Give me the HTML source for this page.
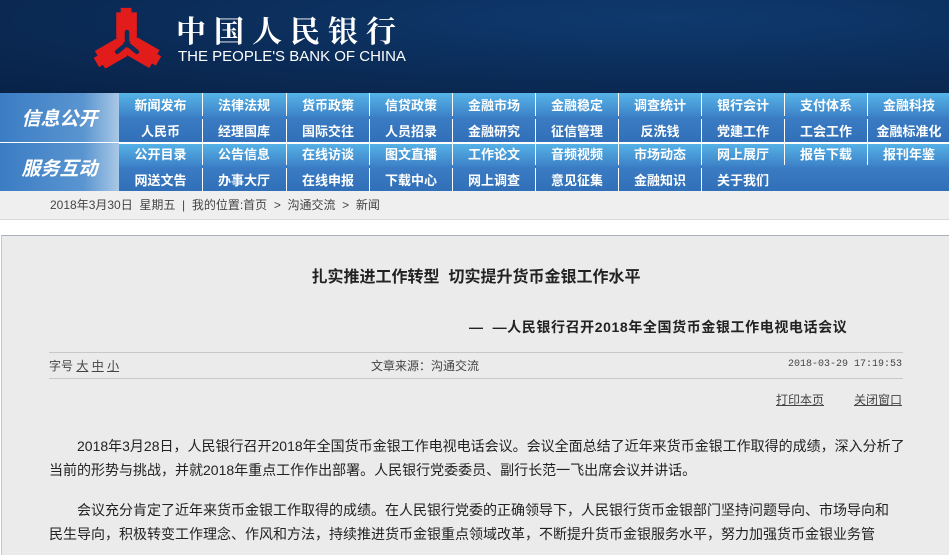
<!DOCTYPE html>
<html><head><meta charset="utf-8"><style>
*{margin:0;padding:0;box-sizing:border-box}
body{width:949px;height:547px;overflow:hidden;background:#fff;font-family:"Liberation Sans","Noto Sans CJK SC","WenQuanYi Zen Hei",sans-serif;position:relative}
.hdr{position:absolute;left:0;top:0;width:949px;height:93px;background:radial-gradient(ellipse at 70% 20%,#0f3a6e 0%,#0b2d5a 50%,#082247 100%)}
.cn{position:absolute;left:176px;top:12px;color:#fff;font-size:30px;line-height:34px;font-weight:bold;letter-spacing:8px;font-family:"Noto Serif CJK SC",serif}
.en{position:absolute;left:178px;top:48px;color:#fff;font-size:15px;line-height:17px}
.nav{position:absolute;left:0;width:949px;height:49px;background:linear-gradient(#56b4e8,#3d82c8 48%,#3a7bc3 52%,#3170b8)}
.lbl{position:absolute;left:0;width:119px;height:49px;background:linear-gradient(90deg,#3b7cc4,#5a95d0 70%,#a9c8e6);color:#fff;font-size:19px;font-style:italic;font-weight:bold;text-align:center;line-height:49px;font-family:"Noto Sans CJK SC",sans-serif}
.c{position:absolute;width:83px;height:23px;text-align:center;color:#fff;font-size:13px;font-weight:bold;line-height:23px;font-family:"Noto Sans CJK SC",sans-serif;border-left:1px solid #fff}
.bc{position:absolute;left:0;top:191px;width:949px;height:29px;background:#efefef;border-bottom:1px solid #d8d8d8;font-size:12px;color:#444;line-height:28px;padding-left:50px}
.box{position:absolute;left:1px;top:235px;width:948px;height:320px;background:#ebebeb;border-top:1px solid #aab0ba;border-left:1px solid #c8c8c8}
.t{position:absolute;left:0;width:948px;top:27px;text-align:center;font-size:16px;font-weight:bold;color:#222}
.st{position:absolute;left:467px;top:81px;font-size:14px;font-weight:bold;color:#222;letter-spacing:0.6px}
.ln{position:absolute;left:47px;width:854px;height:1px;background:#c8c8c8}
.m{position:absolute;top:121px;font-size:12px;color:#444}
.p{position:absolute;left:47px;font-size:14px;color:#222;line-height:24px;white-space:nowrap}
a{color:#444;text-decoration:underline}
</style></head><body>
<div class="hdr">
<svg style="position:absolute;left:92px;top:7px" width="70" height="61" viewBox="-4 0 78 66">
<g fill="#e21b1b">
<polygon points="28,0 40,0 40,5 46,5 46,33 37,38 28,38 23,33 23,5 28,5"/>
<g transform="rotate(120 35 40)"><polygon points="28,0 40,0 40,5 46,5 46,33 37,38 28,38 23,33 23,5 28,5"/></g>
<g transform="rotate(240 35 40)"><polygon points="28,0 40,0 40,5 46,5 46,33 37,38 28,38 23,33 23,5 28,5"/></g>
</g>
<g stroke="#0b2d5a" stroke-width="5" stroke-linecap="round" fill="none">
<path d="M35 27 L35 40 L24 49 M35 40 L46 49"/>
</g>
</svg>
<div class="cn">中国人民银行</div>
<div class="en">THE PEOPLE'S BANK OF CHINA</div>
</div>

<div class="nav" style="top:93px"></div>
<div class="nav" style="top:143px;height:48px"></div>
<div style="position:absolute;left:0;top:142px;width:949px;height:2px;background:#fff"></div>
<div class="lbl" style="top:93px">信息公开</div>
<div class="lbl" style="top:143px">服务互动</div>

<div class="c" style="left:119px;top:93px;border:0">新闻发布</div><div class="c" style="left:202px;top:93px">法律法规</div><div class="c" style="left:286px;top:93px">货币政策</div><div class="c" style="left:369px;top:93px">信贷政策</div><div class="c" style="left:452px;top:93px">金融市场</div><div class="c" style="left:535px;top:93px">金融稳定</div><div class="c" style="left:618px;top:93px">调查统计</div><div class="c" style="left:701px;top:93px">银行会计</div><div class="c" style="left:784px;top:93px">支付体系</div><div class="c" style="left:867px;top:93px">金融科技</div>
<div class="c" style="left:119px;top:119px;border:0">人民币</div><div class="c" style="left:202px;top:119px">经理国库</div><div class="c" style="left:286px;top:119px">国际交往</div><div class="c" style="left:369px;top:119px">人员招录</div><div class="c" style="left:452px;top:119px">金融研究</div><div class="c" style="left:535px;top:119px">征信管理</div><div class="c" style="left:618px;top:119px">反洗钱</div><div class="c" style="left:701px;top:119px">党建工作</div><div class="c" style="left:784px;top:119px">工会工作</div><div class="c" style="left:867px;top:119px">金融标准化</div>
<div class="c" style="left:119px;top:142px;border:0">公开目录</div><div class="c" style="left:202px;top:142px">公告信息</div><div class="c" style="left:286px;top:142px">在线访谈</div><div class="c" style="left:369px;top:142px">图文直播</div><div class="c" style="left:452px;top:142px">工作论文</div><div class="c" style="left:535px;top:142px">音频视频</div><div class="c" style="left:618px;top:142px">市场动态</div><div class="c" style="left:701px;top:142px">网上展厅</div><div class="c" style="left:784px;top:142px">报告下载</div><div class="c" style="left:867px;top:142px">报刊年鉴</div>
<div class="c" style="left:119px;top:168px;border:0">网送文告</div><div class="c" style="left:202px;top:168px">办事大厅</div><div class="c" style="left:286px;top:168px">在线申报</div><div class="c" style="left:369px;top:168px">下载中心</div><div class="c" style="left:452px;top:168px">网上调查</div><div class="c" style="left:535px;top:168px">意见征集</div><div class="c" style="left:618px;top:168px">金融知识</div><div class="c" style="left:701px;top:168px">关于我们</div>

<div class="bc">2018年3月30日&nbsp; 星期五 &nbsp;|&nbsp; 我的位置:首页 &nbsp;&gt;&nbsp; 沟通交流 &nbsp;&gt;&nbsp; 新闻</div>

<div class="box">
<div class="t">扎实推进工作转型&nbsp; 切实提升货币金银工作水平</div>
<div class="st">—&nbsp; —人民银行召开2018年全国货币金银工作电视电话会议</div>
<div class="ln" style="top:116px"></div>
<div class="m" style="left:47px">字号 <a>大</a> <a>中</a> <a>小</a></div>
<div class="m" style="left:369px">文章来源：沟通交流</div>
<div class="m" style="left:786px;font-family:'Liberation Mono',monospace;font-size:10px;top:123px">2018-03-29 17:19:53</div>
<div class="ln" style="top:142px"></div>
<div class="m" style="left:774px;top:155px"><a>打印本页</a></div>
<div class="m" style="left:852px;top:155px"><a>关闭窗口</a></div>
<div class="p" style="top:198px">&emsp;&emsp;2018年3月28日，人民银行召开2018年全国货币金银工作电视电话会议。会议全面总结了近年来货币金银工作取得的成绩，深入分析了<br>当前的形势与挑战，并就2018年重点工作作出部署。人民银行党委委员、副行长范一飞出席会议并讲话。</div>
<div class="p" style="top:262px">&emsp;&emsp;会议充分肯定了近年来货币金银工作取得的成绩。在人民银行党委的正确领导下，人民银行货币金银部门坚持问题导向、市场导向和<br>民生导向，积极转变工作理念、作风和方法，持续推进货币金银重点领域改革，不断提升货币金银服务水平，努力加强货币金银业务管</div>
</div>
</body></html>
